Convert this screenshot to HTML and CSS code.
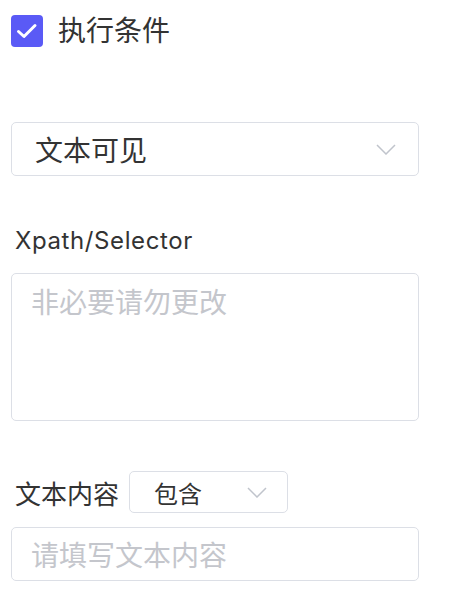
FILE: index.html
```html
<!DOCTYPE html>
<html>
<head>
    <title>执行条件</title>
    <link rel="stylesheet" href="styles.css">
</head>
<body>
    <div class="form">
        <label class="check-row">
            <span class="checkbox">
                <svg width="32" height="32" viewBox="0 0 32 32">
                    <path d="M7.5 16.5 L13 21.5 L24 10.5" fill="none" stroke="#fff" stroke-width="3" stroke-linecap="round" stroke-linejoin="round"/>
                </svg>
            </span>
            <span class="check-text">执行条件</span>
        </label>

        <div class="select select-large">
            <span>文本可见</span>
            <svg class="arrow" width="20" height="11" viewBox="0 0 20 11">
                <path d="M1 1 L10 10 L19 1" fill="none" stroke="#c0c4cc" stroke-width="1.5"/>
            </svg>
        </div>

        <div class="label">Xpath/Selector</div>
        <textarea class="textarea" placeholder="非必要请勿更改"></textarea>

        <div class="inline-row">
            <span class="inline-label">文本内容</span>
            <div class="select select-small">
                <span>包含</span>
                <svg class="arrow" width="20" height="11" viewBox="0 0 20 11">
                    <path d="M1 1 L10 10 L19 1" fill="none" stroke="#c0c4cc" stroke-width="1.5"/>
                </svg>
            </div>
        </div>
        <input class="input" type="text" placeholder="请填写文本内容">
    </div>
</body>
</html>
```

FILE: styles.css
```css
body {
    margin: 0;
    padding: 0;
    background-color: #fff;
    color: #333;
    font-family: Inter, "Noto Sans CJK SC", sans-serif;
}
.form {
    width: 408px;
    padding: 15px 0 0 11px;
}
.check-row {
    display: flex;
    align-items: center;
    gap: 15px;
    height: 32px;
}
.checkbox {
    width: 32px;
    height: 32px;
    border-radius: 4px;
    background-color: #5a5af6;
    display: flex;
}
.check-text {
    font-size: 28px;
    line-height: 32px;
}
.select {
    display: flex;
    align-items: center;
    justify-content: space-between;
    border: 1px solid #dcdfe6;
    border-radius: 5px;
    box-sizing: border-box;
    color: #333;
}
.select-large {
    margin-top: 75px;
    height: 54px;
    padding: 0 22px 0 23px;
    font-size: 28px;
}
.select-small {
    width: 159px;
    height: 42px;
    padding: 0 20px 0 24px;
    font-size: 24px;
}
.arrow {
    display: block;
}
.label {
    margin-top: 49px;
    padding-left: 4px;
    font-size: 24px;
    letter-spacing: 0.6px;
    line-height: 32px;
}
.textarea,
.input {
    display: block;
    width: 408px;
    box-sizing: border-box;
    border: 1px solid #dcdfe6;
    border-radius: 5px;
    font-family: "Noto Sans CJK SC", sans-serif;
    font-size: 28px;
    color: #333;
    outline: none;
    margin: 0;
}
.textarea {
    margin-top: 16px;
    height: 148px;
    padding: 6px 19px;
    line-height: 42px;
    resize: none;
}
.textarea::placeholder,
.input::placeholder {
    color: #c4c6cc;
}
.inline-row {
    display: flex;
    align-items: center;
    gap: 10px;
    margin-top: 50px;
}
.inline-label {
    padding-left: 4px;
    font-size: 26px;
}
.input {
    margin-top: 14px;
    height: 54px;
    padding: 0 19px;
}
```
